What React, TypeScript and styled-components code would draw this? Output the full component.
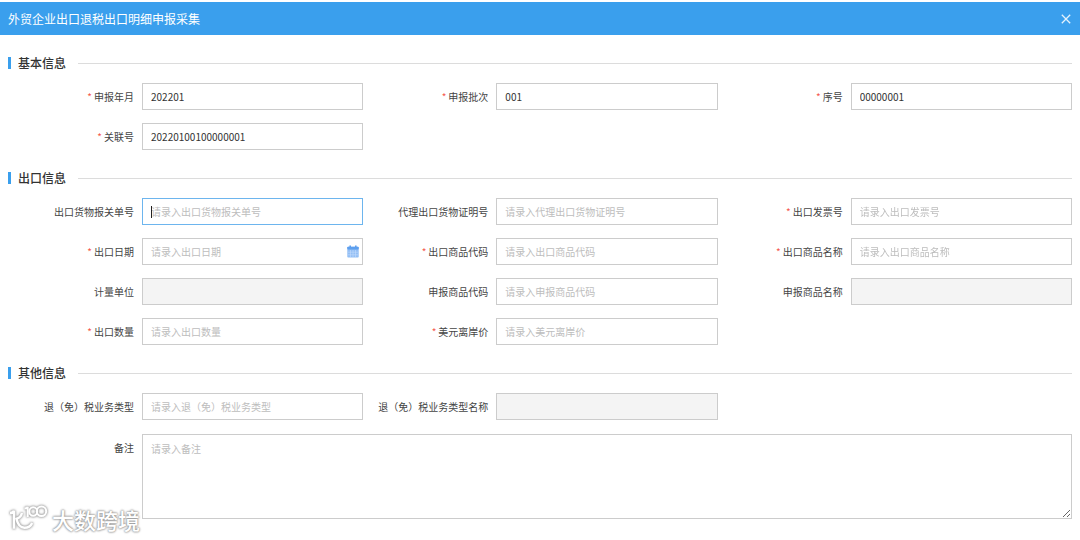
import React, { useId } from 'react';
import styled, { createGlobalStyle, css } from 'styled-components';

const BLUE = '#3a9fed';

const GlobalStyle = createGlobalStyle`
  *, *::before, *::after { box-sizing: border-box; }
  body {
    margin: 0;
    background: #fff;
    color: #444;
    font-family: 'Noto Sans CJK SC', 'Liberation Sans', sans-serif;
    font-size: 10px;
    line-height: 14px;
  }
`;

const Page = styled.div`
  position: relative;
  min-height: 100vh;
  padding-top: 2px;
`;

const TitleBar = styled.header`
  display: flex;
  align-items: center;
  justify-content: space-between;
  height: 33px;
  padding: 0 8px;
  background: ${BLUE};
  color: #fff;
`;

const Title = styled.h1`
  margin: 0;
  font-size: 12px;
  font-weight: 400;
  line-height: 20px;
`;

const CloseButton = styled.button`
  display: flex;
  align-items: center;
  justify-content: center;
  width: 12px;
  height: 20px;
  padding: 0;
  border: 0;
  background: none;
  color: #e4f2fd;
  cursor: pointer;
`;

const Form = styled.form`
  display: flex;
  flex-direction: column;
  gap: 18px;
  padding: 18px 8px 20px;
`;

const Section = styled.section`
  display: flex;
  flex-direction: column;
  gap: 10px;
`;

const SectionHead = styled.div`
  display: flex;
  align-items: center;
  height: 20px;

  &::before {
    content: '';
    width: 3px;
    height: 12px;
    margin-right: 7px;
    background: ${BLUE};
  }

  &::after {
    content: '';
    flex: 1;
    height: 1px;
    margin-left: 12px;
    background: #dcdcdc;
  }
`;

const SectionTitle = styled.h2`
  margin: 0;
  color: #333;
  font-size: 12px;
  font-weight: 500;
  line-height: 20px;
`;

const Grid = styled.div<{ $gap?: number }>`
  display: grid;
  grid-template-columns: repeat(3, minmax(0, 1fr));
  row-gap: ${({ $gap = 13 }) => $gap}px;
  padding-left: 1px;
`;

const Field = styled.div<{ $wide?: boolean }>`
  display: flex;
  align-items: flex-start;
  ${({ $wide }) => $wide && css`grid-column: 1 / -1;`}
`;

const Label = styled.label`
  flex: none;
  width: 133px;
  padding-right: 8px;
  line-height: 27px;
  text-align: right;
  white-space: nowrap;
`;

const Star = styled.span`
  margin-right: 2px;
  color: #f5584e;
`;

const Control = styled.div`
  position: relative;
  display: flex;
  flex: 1;
  min-width: 0;
`;

const box = css`
  display: block;
  width: 100%;
  margin: 0;
  border: 1px solid #ccc;
  border-radius: 0;
  outline: none;
  background: #fff;
  color: #333;
  font: inherit;

  &::placeholder { color: #bdbdbd; opacity: 1; }
  &:focus { border-color: #6db5ee; caret-color: transparent; }
  &:disabled { background: #f4f4f4; }
`;

const TextInput = styled.input`
  ${box}
  height: 27px;
  padding: 0 8px;
`;

const Caret = styled.span`
  position: absolute;
  top: 8px;
  left: 9px;
  width: 1px;
  height: 12px;
  background: #222;
  pointer-events: none;
`;

const TextArea = styled.textarea`
  ${box}
  height: 85px;
  padding: 7px 8px;
  resize: vertical;
`;

const PickerButton = styled.button`
  position: absolute;
  top: 7px;
  right: 4px;
  display: flex;
  padding: 0;
  border: 0;
  background: none;
  cursor: pointer;
`;

const Watermark = styled.div`
  position: absolute;
  left: 8px;
  top: 503px;
  display: flex;
  align-items: center;
  gap: 4px;
  color: #fff;
  font-size: 22px;
  font-weight: 500;
  line-height: 32px;
  text-shadow: 0 0 2px #888, 0 0 2px #aaa, 0 0 3px #bbb;
  pointer-events: none;

  svg { filter: drop-shadow(0 0 1px #999) drop-shadow(0 0 1px #bbb); }
`;

function CloseIcon() {
  return (
    <svg width="10" height="10" viewBox="0 0 10 10" fill="none" stroke="currentColor" strokeWidth="1.3" aria-hidden="true">
      <path d="M.8.8l8.4 8.4M9.2.8L.8 9.2" />
    </svg>
  );
}

function CalendarIcon() {
  return (
    <svg width="12" height="13" viewBox="0 0 12 13" aria-hidden="true">
      <rect x=".3" y="1.8" width="11.4" height="10.7" rx=".8" fill="#93bff5" />
      <rect x=".3" y="1.8" width="11.4" height="2.8" rx=".8" fill="#5d9fee" />
      <path d="M3.2.4v2.4M8.800.4v2.400" stroke="#5d9fee" strokeWidth="1.6" />
      <path d="M1 7.200h10M1 9.800h10M3.500 5v7M6 5v7M8.500 5v7" stroke="#c4dcfb" strokeWidth=".6" />
    </svg>
  );
}

function WatermarkLogo() {
  return (
    <svg width="40" height="30" viewBox="0 0 40 30" fill="none" stroke="#fff" strokeWidth="2.5" aria-hidden="true">
      <path d="M2 9c2 0 3.400-.7 4-2.300v18" />
      <path d="M14 9c-.8 3-2.600 5-5.500 5.800 1.200 5.600 4 9 8 9 3.500 0 6.200-1.600 7.700-4.800" />
      <path strokeWidth="2" d="M16.500 4.500c1.700 0 2.700-.5 3.200-1.500v10" />
      <ellipse cx="25.200" cy="7.500" rx="3.900" ry="4.300" strokeWidth="2" />
      <ellipse cx="33.500" cy="7.300" rx="4.700" ry="4.800" strokeWidth="2" />
    </svg>
  );
}

type FieldProps = {
  label: string;
  required?: boolean;
  value?: string;
  disabled?: boolean;
  focused?: boolean;
  picker?: boolean;
};

function TextField({ label, required, value, disabled, focused, picker }: FieldProps) {
  const id = useId();
  return (
    <Field>
      <Label htmlFor={id}>
        {required && <Star>*</Star>}
        {label}
      </Label>
      <Control>
        <TextInput
          id={id}
          type="text"
          required={required}
          defaultValue={value}
          disabled={disabled}
          autoFocus={focused}
          placeholder={disabled ? undefined : `请录入${label}`}
        />
        {focused && <Caret />}
        {picker && (
          <PickerButton type="button" aria-label="选择日期">
            <CalendarIcon />
          </PickerButton>
        )}
      </Control>
    </Field>
  );
}

function Heading({ children }: { children: React.ReactNode }) {
  return (
    <SectionHead>
      <SectionTitle>{children}</SectionTitle>
    </SectionHead>
  );
}

export default function App() {
  return (
    <Page>
      <GlobalStyle />
      <TitleBar>
        <Title>外贸企业出口退税出口明细申报采集</Title>
        <CloseButton type="button" aria-label="关闭">
          <CloseIcon />
        </CloseButton>
      </TitleBar>
      <Form>
        <Section>
          <Heading>基本信息</Heading>
          <Grid>
            <TextField label="申报年月" required value="202201" />
            <TextField label="申报批次" required value="001" />
            <TextField label="序号" required value="00000001" />
            <TextField label="关联号" required value="20220100100000001" />
          </Grid>
        </Section>
        <Section>
          <Heading>出口信息</Heading>
          <Grid>
            <TextField label="出口货物报关单号" focused />
            <TextField label="代理出口货物证明号" />
            <TextField label="出口发票号" required />
            <TextField label="出口日期" required picker />
            <TextField label="出口商品代码" required />
            <TextField label="出口商品名称" required />
            <TextField label="计量单位" disabled />
            <TextField label="申报商品代码" />
            <TextField label="申报商品名称" disabled />
            <TextField label="出口数量" required />
            <TextField label="美元离岸价" required />
          </Grid>
        </Section>
        <Section>
          <Heading>其他信息</Heading>
          <Grid $gap={14}>
            <TextField label="退（免）税业务类型" />
            <TextField label="退（免）税业务类型名称" disabled />
            <Field $wide>
              <Label htmlFor="remark">备注</Label>
              <Control>
                <TextArea id="remark" placeholder="请录入备注" />
              </Control>
            </Field>
          </Grid>
        </Section>
      </Form>
      <Watermark>
        <WatermarkLogo />
        <span>大数跨境</span>
      </Watermark>
    </Page>
  );
}
